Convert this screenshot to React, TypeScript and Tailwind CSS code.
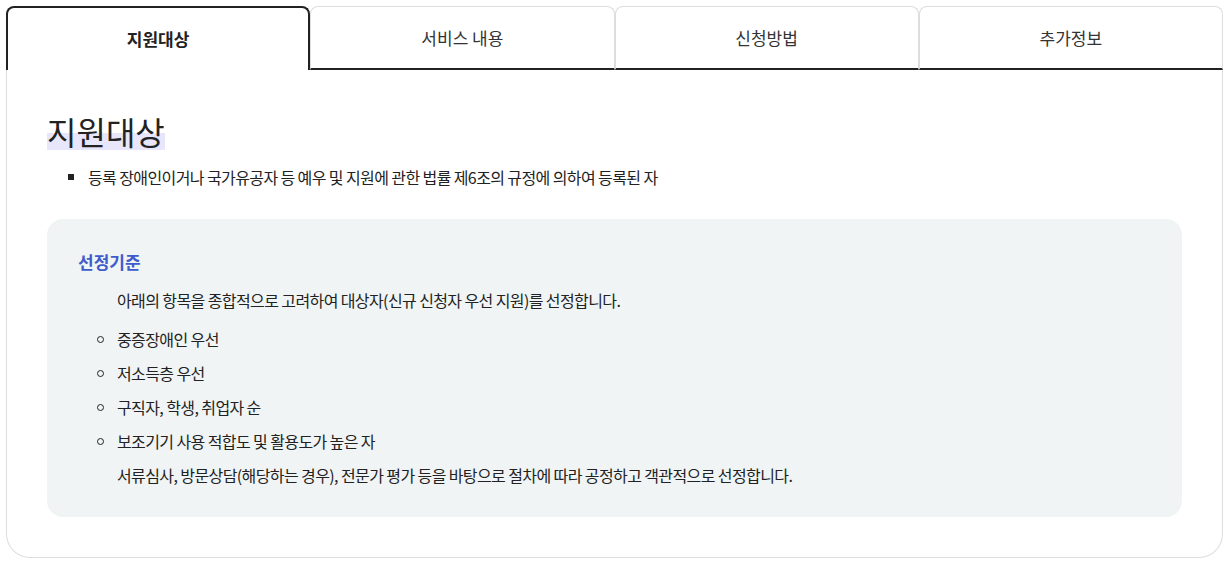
import React from "react";

const tabs = ["지원대상", "서비스 내용", "신청방법", "추가정보"];

const criteria = [
  "중증장애인 우선",
  "저소득층 우선",
  "구직자, 학생, 취업자 순",
  "보조기기 사용 적합도 및 활용도가 높은 자",
];

export default function App() {
  const active = 0;

  return (
    <div className="bg-white p-[6px] font-['Noto_Sans_CJK_KR','Noto_Sans',sans-serif] text-[#222]">
      {/* tabs */}
      <div className="flex">
        {tabs.map((tab, i) =>
          i === active ? (
            <div
              key={tab}
              className="flex h-[64px] w-1/4 items-center justify-center rounded-t-lg border-2 border-b-0 border-[#222] text-[17px] font-bold"
            >
              {tab}
            </div>
          ) : (
            <div
              key={tab}
              className="flex h-[64px] w-1/4 items-center justify-center rounded-t-lg border border-b-2 border-[#ddd] border-b-[#222] text-[17px] text-[#333]"
            >
              {tab}
            </div>
          )
        )}
      </div>

      {/* panel */}
      <div className="rounded-b-3xl border border-t-0 border-[#ddd] px-10 pb-10 pt-[41px] tracking-[-0.6px]">
        <h2 className="text-[32px] font-normal leading-[40px] tracking-normal">
          <span className="inline-block bg-[linear-gradient(transparent_55%,#e8e6fb_55%,#e8e6fb_97%,transparent_97%)]">
            지원대상
          </span>
        </h2>

        <ul className="mt-[14px] pl-[41px] text-[16px] leading-6">
          <li className="flex items-center">
            <span className="-ml-[20px] mr-[14px] h-[6px] w-[6px] bg-[#222]" />
            등록 장애인이거나 국가유공자 등 예우 및 지원에 관한 법률 제6조의 규정에 의하여 등록된 자
          </li>
        </ul>

        <div className="mt-[30px] rounded-2xl bg-[#f0f4f5] px-[31px] pb-[30px] pt-[31px]">
          <h3 className="text-[17px] font-bold leading-6 tracking-normal text-[#3f5bcc]">선정기준</h3>

          <div className="pl-[39px] text-[16px] leading-6">
            <p className="mt-[14px]">
              아래의 항목을 종합적으로 고려하여 대상자(신규 신청자 우선 지원)를 선정합니다.
            </p>
            <ul className="mt-[15px] flex flex-col gap-[10px]">
              {criteria.map((item) => (
                <li key={item} className="flex items-center">
                  <span className="-ml-[20px] mr-[13px] h-[7px] w-[7px] rounded-full border border-[#222]" />
                  {item}
                </li>
              ))}
            </ul>
            <p className="mt-[10px]">
              서류심사, 방문상담(해당하는 경우), 전문가 평가 등을 바탕으로 절차에 따라 공정하고 객관적으로 선정합니다.
            </p>
          </div>
        </div>
      </div>
    </div>
  );
}
